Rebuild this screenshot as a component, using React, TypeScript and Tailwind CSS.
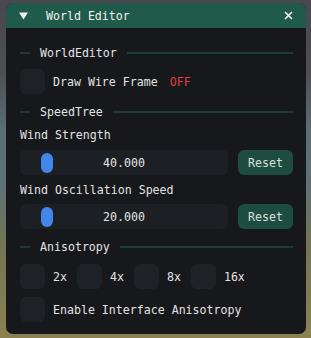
import React from 'react';

const mono = { fontFamily: '"DejaVu Sans Mono", "Liberation Mono", monospace' };

function SectionHeader({ title, className = '' }: { title: string; className?: string }) {
  return (
    <div className={`flex h-[14px] items-center ${className}`}>
      <div className="h-[2px] w-[10px] bg-[#1d3a33]" />
      <span className="ml-[10px] mr-[10px] text-[#e3e3e3]">{title}</span>
      <div className="h-[2px] flex-1 bg-[#1d3a33]" />
    </div>
  );
}

function Checkbox({ label, extra }: { label: string; extra?: React.ReactNode }) {
  return (
    <div className="flex items-center">
      <div className="h-[25px] w-[25px] rounded-[6px] bg-[#1e2227]" />
      <span className="ml-[8px] text-[#e3e3e3]">{label}</span>
      {extra}
    </div>
  );
}

function SliderRow({ value, pos }: { value: string; pos: number }) {
  return (
    <div className="flex items-center">
      <div className="relative flex h-[25px] w-[208px] items-center justify-center rounded-[5px] bg-[#1c1f23]">
        <div
          className="absolute top-[3px] h-[20px] w-[12px] rounded-full bg-[#4287e8]"
          style={{ left: pos }}
        />
        <span className="relative text-[#e3e3e3]">{value}</span>
      </div>
      <button className="ml-[10px] flex h-[25px] w-[55px] items-center justify-center rounded-[6px] bg-[#1f4c40] text-[#d8e0de]">
        Reset
      </button>
    </div>
  );
}

export default function App() {
  const aniso = ['2x', '4x', '8x', '16x'];
  return (
    <div
      className="h-[338px] w-[311px] overflow-hidden bg-[linear-gradient(to_bottom,#47474d_0%,#4f4f53_22%,#5b6e72_38%,#5f7274_55%,#737453_72%,#8a8350_100%)] pl-[6px] pt-[3px] text-[11.6px] leading-[14px]"
      style={mono}
    >
      <div className="flex h-[331px] w-[300px] flex-col overflow-hidden rounded-[7px] bg-[#16181b]">
        <div className="flex h-[25px] shrink-0 items-center bg-[#1f5a4b] pl-[13px] pr-[13px]">
          <svg width="9" height="8" viewBox="0 0 9 8">
            <polygon points="0,0.5 9,0.5 4.5,7.5" fill="#f2f2f2" />
          </svg>
          <span className="ml-[18px] flex-1 text-[#eef2f0]">World Editor</span>
          <svg width="9" height="9" viewBox="0 0 9 9">
            <path d="M1 1 L8 8 M8 1 L1 8" stroke="#f2f2f2" strokeWidth="1.6" />
          </svg>
        </div>

        <div className="flex flex-col pl-[14px] pr-[13px] pt-[18px]">
          <SectionHeader title="WorldEditor" />
          <div className="mt-[9px]">
            <Checkbox
              label="Draw Wire Frame"
              extra={<span className="ml-[12px] text-[#e23c3c]">OFF</span>}
            />
          </div>

          <SectionHeader title="SpeedTree" className="mt-[11px]" />
          <div className="mt-[9px] text-[#e3e3e3]">Wind Strength</div>
          <div className="mt-[8px]">
            <SliderRow value="40.000" pos={21} />
          </div>
          <div className="mt-[8px] text-[#e3e3e3]">Wind Oscillation Speed</div>
          <div className="mt-[7px]">
            <SliderRow value="20.000" pos={21} />
          </div>

          <SectionHeader title="Anisotropy" className="mt-[11px]" />
          <div className="mt-[10px] flex gap-[10px]">
            {aniso.map((a) => (
              <Checkbox key={a} label={a} />
            ))}
          </div>
          <div className="mt-[8px]">
            <Checkbox label="Enable Interface Anisotropy" />
          </div>
        </div>
      </div>
    </div>
  );
}
